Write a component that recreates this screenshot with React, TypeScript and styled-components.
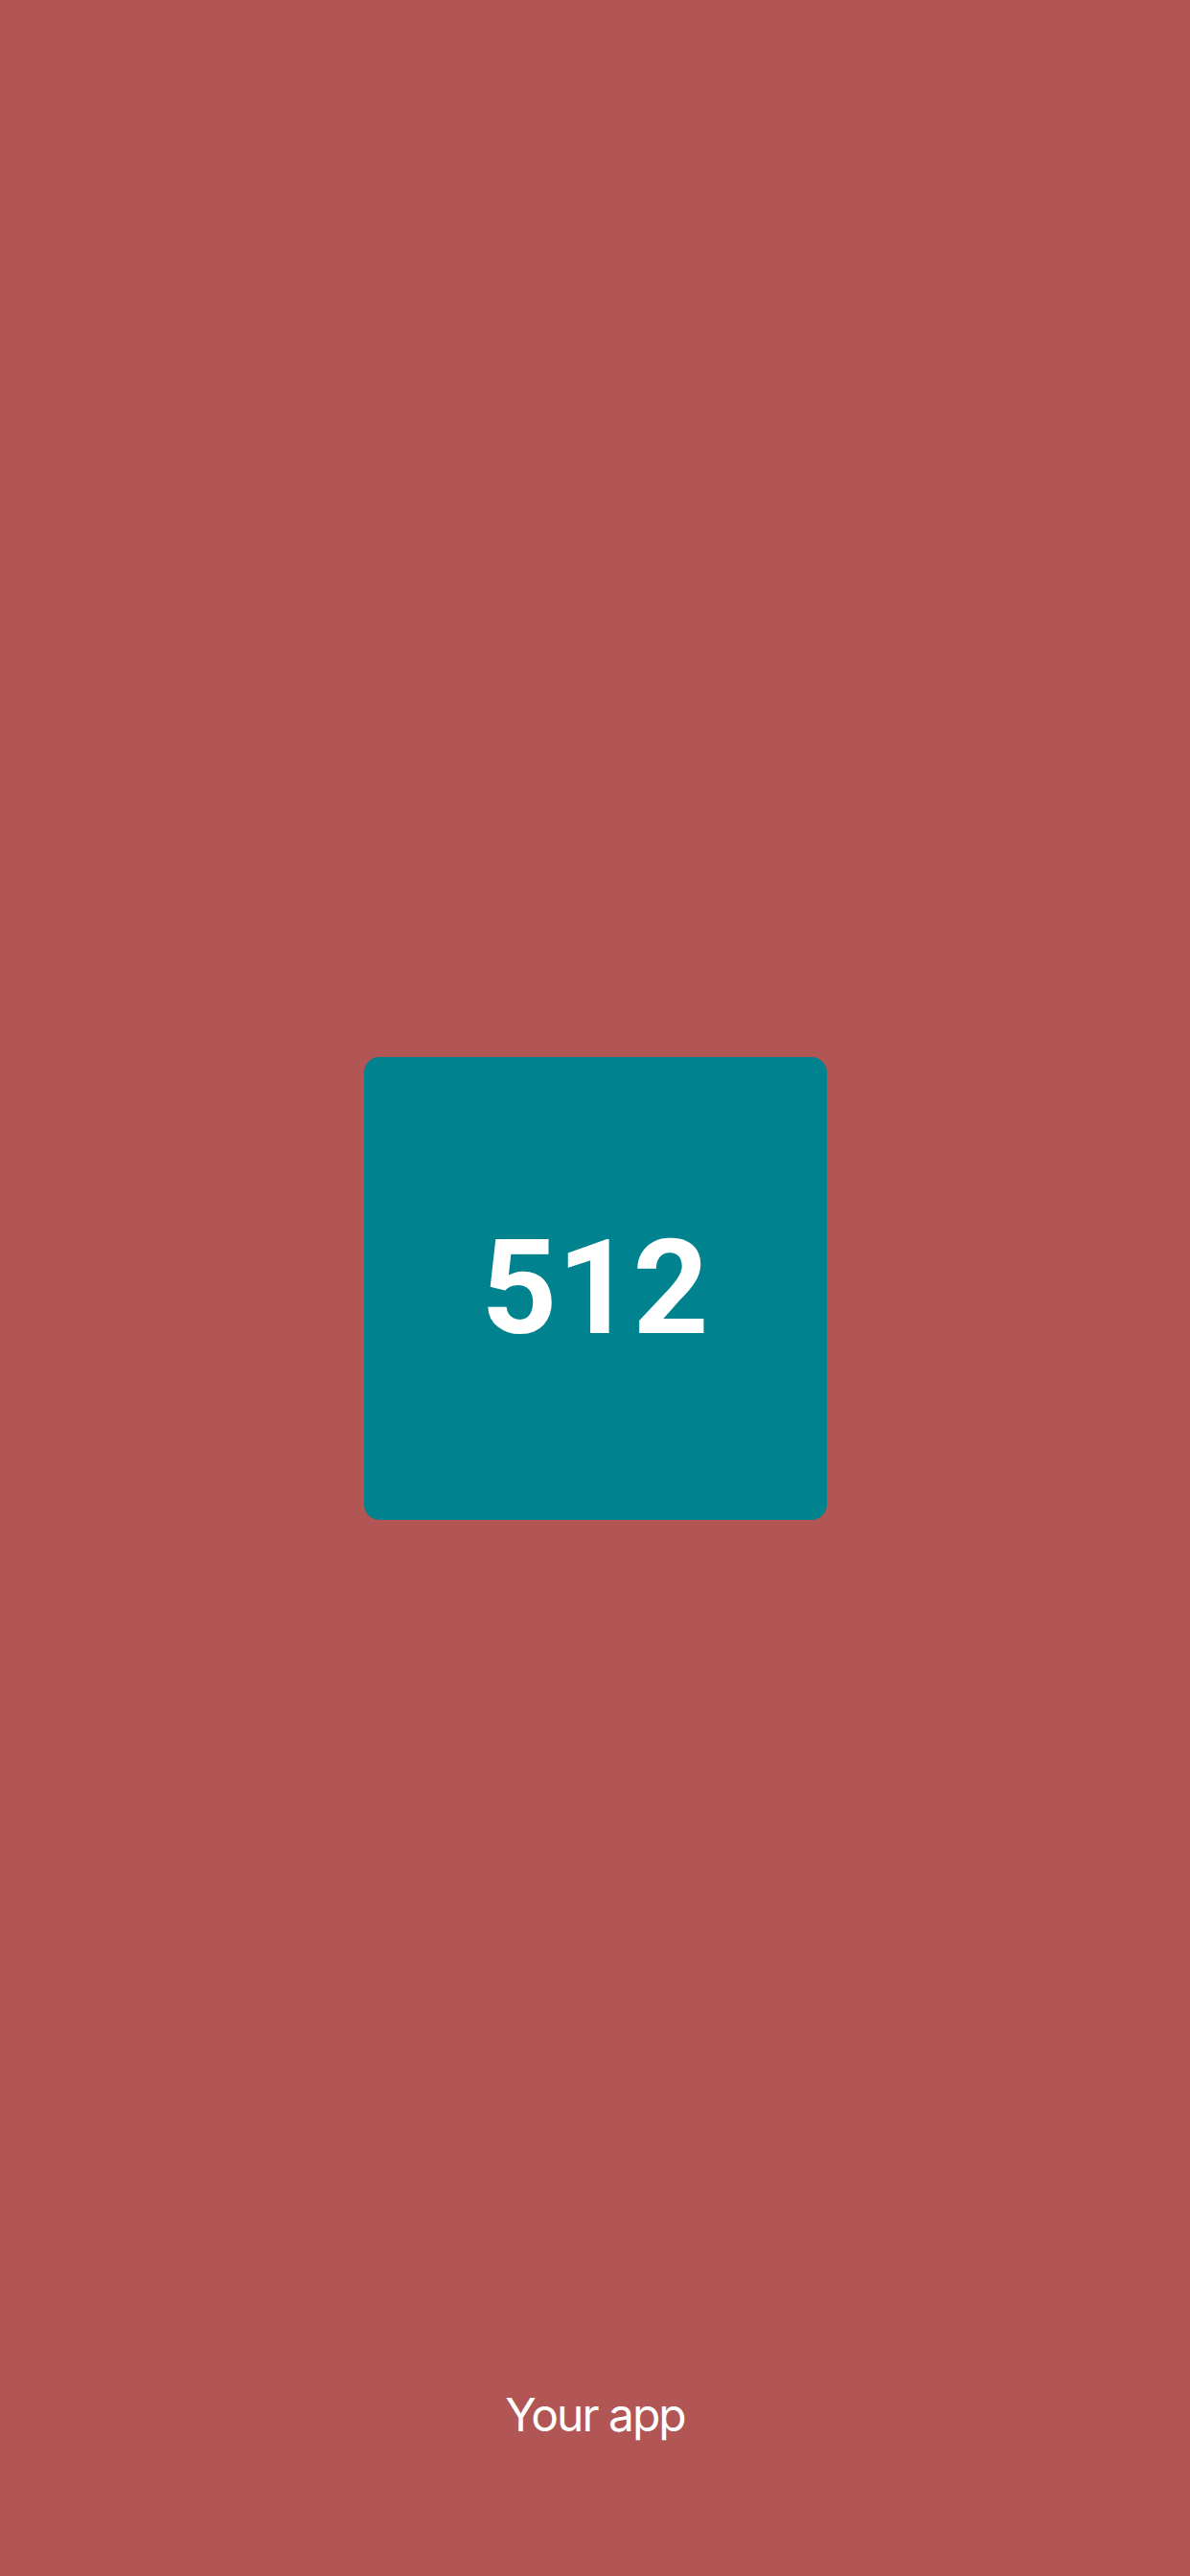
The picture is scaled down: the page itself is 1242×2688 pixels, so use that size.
import React from "react";
import styled, { createGlobalStyle } from "styled-components";

const Global = createGlobalStyle`
  html, body { margin: 0; padding: 0; }
  body { background: #b25555; }
`;

const Screen = styled.div`
  width: 1242px;
  height: 2688px;
  background: #b25555;
  display: grid;
  grid-template-rows: 1fr auto 1fr;
  justify-items: center;
`;

const Tile = styled.div`
  width: 483px;
  height: 483px;
  border-radius: 16px;
  background: #00838f;
  display: flex;
  align-items: center;
  justify-content: center;
`;

const Value = styled.span`
  font-family: Roboto, "Liberation Sans", sans-serif;
  font-weight: 700;
  font-size: 138px;
  line-height: 1;
  color: #ffffff;
`;

const Footer = styled.div`
  align-self: end;
  padding-bottom: 144px;
  font-family: Inter, "Noto Sans", sans-serif;
  font-size: 48px;
  letter-spacing: -2px;
  line-height: 1;
  color: #ffffff;
`;

export default function App() {
  return (
    <>
      <Global />
      <Screen>
        <div />
        <Tile>
          <Value>512</Value>
        </Tile>
        <Footer>Your app</Footer>
      </Screen>
    </>
  );
}
